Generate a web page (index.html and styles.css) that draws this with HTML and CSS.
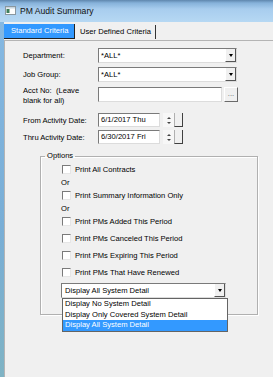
FILE: index.html
```html
<!DOCTYPE html>
<html lang="en">
<head>
    <meta charset="UTF-8">
    <title>PM Audit Summary</title>
    <link rel="stylesheet" href="styles.css">
</head>
<body>
    <div class="window">
        <div class="titlebar">
            <svg class="app-icon" width="11" height="9" viewBox="0 0 11 9">
                <rect x="0.5" y="0.5" width="10" height="8" fill="#fdfdfd" stroke="#8a979f"/>
                <rect x="1" y="1" width="9" height="1.5" fill="#c9d6de"/>
                <rect x="1.5" y="3" width="3" height="4" fill="#3c7d5a"/>
            </svg>
            <span class="title">PM Audit Summary</span>
        </div>
        <div class="client">
            <div class="tabs">
                <div class="tab tab-active">Standard Criteria</div>
                <div class="tab tab-other">User Defined Criteria</div>
            </div>
            <div class="page">
                <div class="row row-dept">
                    <label class="lbl">Department:</label>
                    <div class="combo combo-long">
                        <span class="combo-text">*ALL*</span>
                        <span class="drop-btn"><i class="tri"></i></span>
                    </div>
                </div>
                <div class="row row-job">
                    <label class="lbl">Job Group:</label>
                    <div class="combo combo-long">
                        <span class="combo-text">*ALL*</span>
                        <span class="drop-btn"><i class="tri"></i></span>
                    </div>
                </div>
                <div class="row row-acct">
                    <label class="lbl lbl-two">Acct No:&nbsp; (Leave<br>blank for all)</label>
                    <div class="field field-acct"></div>
                    <div class="dots">...</div>
                </div>
                <div class="row row-from">
                    <label class="lbl">From Activity Date:</label>
                    <div class="field field-date">6/1/2017 Thu</div>
                    <div class="spin"><i class="up"></i><i class="down"></i></div>
                    <div class="spin-edge"></div>
                </div>
                <div class="row row-thru">
                    <label class="lbl">Thru Activity Date:</label>
                    <div class="field field-date">6/30/2017 Fri</div>
                    <div class="spin"><i class="up"></i><i class="down"></i></div>
                    <div class="spin-edge"></div>
                </div>

                <fieldset class="group">
                    <legend>Options</legend>
                    <div class="opt"><span class="check"></span>Print All Contracts</div>
                    <div class="or">Or</div>
                    <div class="opt"><span class="check"></span>Print Summary Information Only</div>
                    <div class="or">Or</div>
                    <div class="opt"><span class="check"></span>Print PMs Added This Period</div>
                    <div class="opt opt-gap"><span class="check"></span>Print PMs Canceled This Period</div>
                    <div class="opt opt-gap"><span class="check"></span>Print PMs Expiring This Period</div>
                    <div class="opt opt-gap"><span class="check"></span>Print PMs That Have Renewed</div>
                    <div class="combo combo-detail">
                        <span class="combo-text">Display All System Detail</span>
                        <span class="drop-btn"><i class="tri"></i></span>
                        <div class="drop-list">
                            <div class="list-item">Display No System Detail</div>
                            <div class="list-item">Display Only Covered System Detail</div>
                            <div class="list-item list-sel">Display All System Detail</div>
                        </div>
                    </div>
                </fieldset>
            </div>
        </div>
    </div>
</body>
</html>
```

FILE: styles.css
```css
body {
    margin: 0;
    font-family: "Liberation Sans", Arial, sans-serif;
    font-size: 7.6px;
    color: #000;
}
.window {
    width: 273px;
    height: 377px;
    display: flex;
    flex-direction: column;
    overflow: hidden;
    background: linear-gradient(#86b9e3, #79aed6 60%, #7fb3c4);
}
.titlebar {
    flex: none;
    height: 22px;
    box-sizing: border-box;
    display: flex;
    align-items: center;
    gap: 4px;
    padding-left: 5px;
    background: linear-gradient(#5f86ad 0, #86b2da 3px, #a8cdee 9px, #b6d8f3 22px);
}
.app-icon {
    display: block;
    margin-top: -1px;
}
.title {
    font-size: 8.6px;
    color: #111;
    margin-top: -1px;
}
.client {
    flex: 1;
    margin-left: 4px;
    display: flex;
    flex-direction: column;
    background: #f0f0f0;
}
.tabs {
    flex: none;
    height: 18px;
    box-sizing: border-box;
    padding-top: 2px;
    display: flex;
    align-items: flex-start;
}
.tab {
    box-sizing: border-box;
    white-space: nowrap;
}
.tab-active {
    width: 71px;
    height: 15px;
    line-height: 14px;
    padding-left: 7px;
    background: #3399ff;
    color: #fff;
    border-right: 1px solid #222;
    border-bottom: 1px solid #222;
}
.tab-other {
    width: 81px;
    height: 14px;
    line-height: 13px;
    margin-top: 1px;
    padding-left: 5px;
    border-right: 1px solid #333;
}
.page {
    flex: 1;
    border-top: 1px solid #b4b4b4;
    border-left: 1px solid #b4b4b4;
    padding-left: 18px;
}
.row {
    display: flex;
    align-items: center;
}
.row-dept {
    margin-top: 7px;
}
.row-job {
    margin-top: 4px;
}
.row-acct {
    margin-top: 4px;
    align-items: flex-start;
}
.row-from {
    margin-top: 7px;
}
.row-thru {
    margin-top: 3px;
}
.lbl {
    flex: none;
    width: 75px;
    white-space: nowrap;
}
.lbl-two {
    line-height: 10px;
}
.combo {
    position: relative;
    display: flex;
    height: 15px;
    box-sizing: border-box;
    background: #fff;
    border: 1px solid;
    border-color: #7a7a7a #dcdcdc #dcdcdc #7a7a7a;
}
.combo-long {
    width: 139px;
}
.combo-text {
    flex: 1;
    padding-left: 2px;
    line-height: 13px;
    white-space: nowrap;
    overflow: hidden;
}
.drop-btn {
    flex: none;
    width: 11px;
    box-sizing: border-box;
    display: flex;
    align-items: center;
    justify-content: center;
    background: #f0f0f0;
    border-left: 1px solid #fff;
    border-right: 1px solid #555;
    border-bottom: 1px solid #555;
}
.tri {
    width: 0;
    height: 0;
    border-left: 2.5px solid transparent;
    border-right: 2.5px solid transparent;
    border-top: 3px solid #000;
}
.field {
    height: 15px;
    box-sizing: border-box;
    background: #fff;
    border: 1px solid;
    border-color: #7a7a7a #dcdcdc #dcdcdc #7a7a7a;
    padding-left: 2px;
    line-height: 13px;
    white-space: nowrap;
}
.field-acct {
    width: 124px;
    margin-top: 1px;
}
.field-date {
    width: 62px;
    height: 14px;
    line-height: 12px;
}
.dots {
    width: 14px;
    height: 15px;
    margin-top: 1px;
    margin-left: 2px;
    box-sizing: border-box;
    background: #f0f0f0;
    border: 1px solid;
    border-color: #fff #6a6a6a #6a6a6a #fff;
    color: #666;
    text-align: center;
    line-height: 11px;
}
.spin {
    width: 11px;
    height: 14px;
    margin-left: 3px;
    display: flex;
    flex-direction: column;
    align-items: center;
    justify-content: center;
    gap: 3px;
    background: #f7f7f7;
}
.up {
    width: 0;
    height: 0;
    border-left: 2px solid transparent;
    border-right: 2px solid transparent;
    border-bottom: 2px solid #444;
}
.down {
    width: 0;
    height: 0;
    border-left: 2px solid transparent;
    border-right: 2px solid transparent;
    border-top: 2px solid #444;
}
.spin-edge {
    width: 9px;
    height: 14px;
    box-sizing: border-box;
    border-left: 1px solid #b0b0b0;
    border-right: 1px solid #404040;
    border-bottom: 1px solid #404040;
}
.group {
    width: 218px;
    min-width: 0;
    box-sizing: border-box;
    margin: 6px 0 0 17px;
    padding: 1px 0 16px 20px;
    border: 1px solid #b0b0b0;
    box-shadow: 1px 1px 0 #fff, inset 1px 1px 0 #fff;
}
.group legend {
    margin-left: -16px;
    padding: 0 2px;
    line-height: 12px;
}
.opt {
    display: flex;
    align-items: center;
    height: 13px;
    white-space: nowrap;
}
.opt-gap {
    margin-top: 4px;
}
.check {
    flex: none;
    width: 9px;
    height: 9px;
    box-sizing: border-box;
    margin-left: 1px;
    margin-right: 4px;
    background: #fff;
    border: 1px solid;
    border-color: #7a7a7a #e6e6e6 #e6e6e6 #7a7a7a;
}
.or {
    height: 13px;
    line-height: 13px;
}
.combo-detail {
    width: 165px;
    margin-top: 4px;
}
.combo-detail .combo-text {
    padding-left: 3px;
}
.drop-list {
    position: absolute;
    top: 14px;
    left: 0;
    width: 166px;
    box-sizing: border-box;
    background: #fff;
    border: 1px solid #646464;
    z-index: 2;
}
.list-item {
    height: 10.5px;
    line-height: 10.5px;
    padding-left: 2px;
    white-space: nowrap;
}
.list-sel {
    background: #3399ff;
    color: #fff;
}
```
